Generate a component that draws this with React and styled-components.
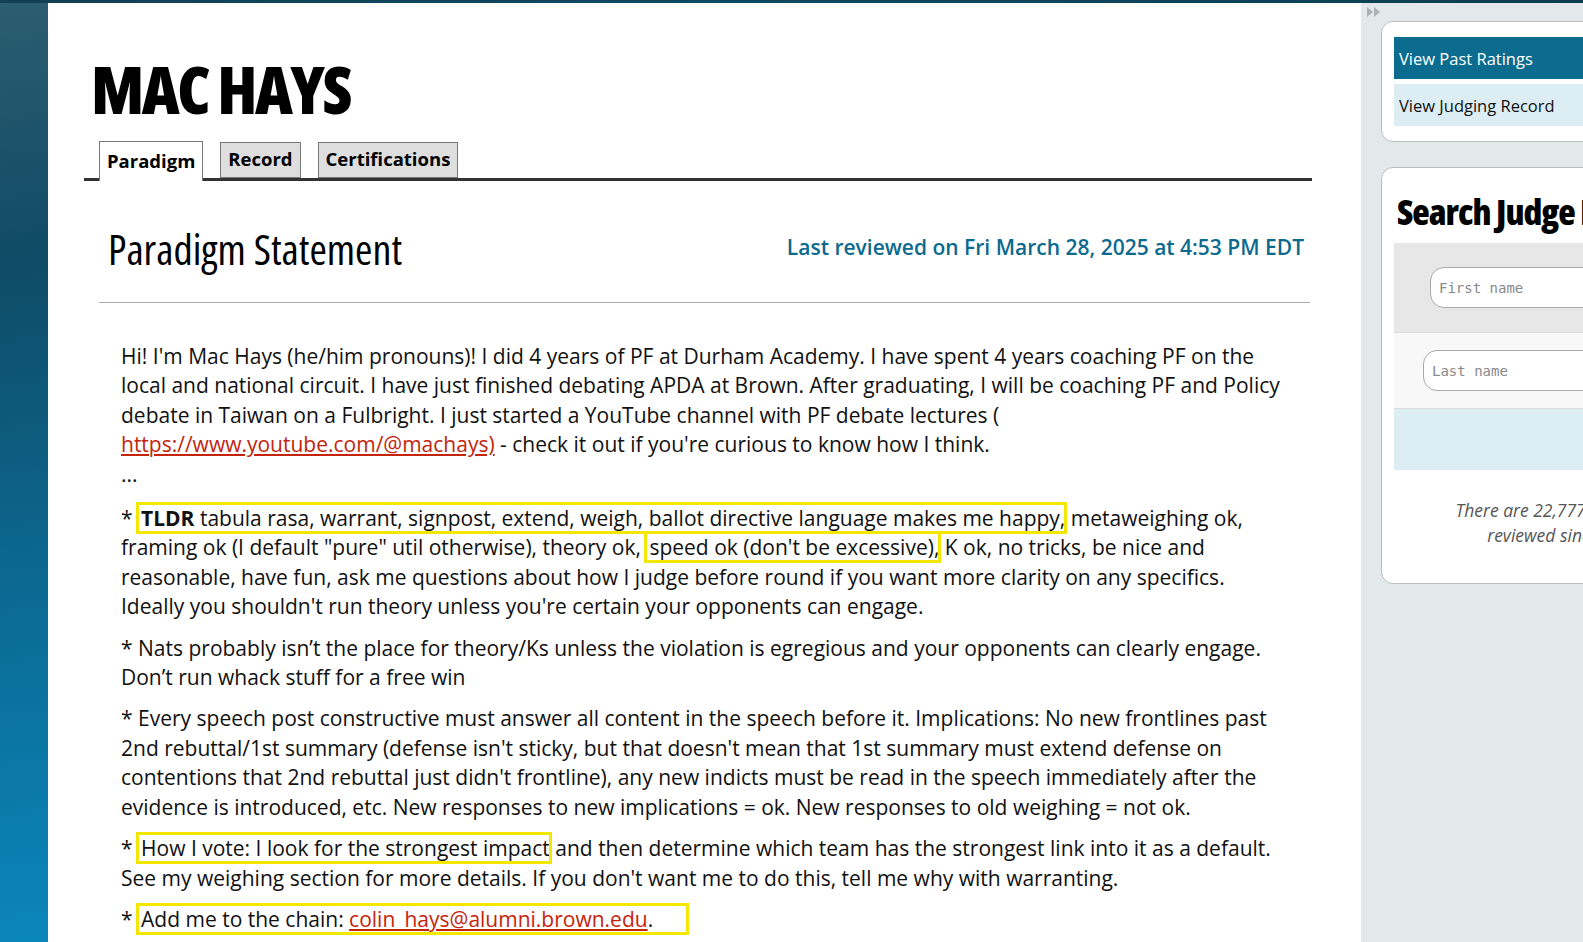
import React from "react";
import styled, { createGlobalStyle } from "styled-components";

const GlobalStyle = createGlobalStyle`
    html, body {
        margin: 0;
        padding: 0;
        overflow: hidden;
        height: 100%;
    }
    body {
        font-family: "Open Sans", "Liberation Sans", sans-serif;
        color: #111;
    }
`;

// condensed display face for page headings
const condensed = `"Open Sans", "Noto Sans", sans-serif`;

const App = () => {
    return (
        <>
            <GlobalStyle />
            <Page>
                <Gutter />
                <Main>
                    <Title>MAC HAYS</Title>
                    <TabBar>
                        <Tab $active>Paradigm</Tab>
                        <Tab>Record</Tab>
                        <Tab>Certifications</Tab>
                    </TabBar>

                    <Section>
                        <SectionHead>
                            <SectionTitle>Paradigm Statement</SectionTitle>
                            <Reviewed>Last reviewed on Fri March 28, 2025 at 4:53 PM EDT</Reviewed>
                        </SectionHead>

                        <Statement>
                            <p>
                                Hi! I'm Mac Hays (he/him pronouns)! I did 4 years of PF at Durham Academy. I have
                                spent 4 years coaching PF on the local and national circuit. I have just finished
                                debating APDA at Brown. After graduating, I will be coaching PF and Policy debate in
                                Taiwan on a Fulbright. I just started a YouTube channel with PF debate lectures ({" "}
                                <a href="#yt">https://www.youtube.com/@machays)</a> - check it out if you're curious
                                to know how I think.
                                <br />
                                ...
                            </p>
                            <p>
                                *{" "}
                                <Mark>
                                    <b>TLDR</b> tabula rasa, warrant, signpost, extend, weigh, ballot directive
                                    language makes me happy,
                                </Mark>{" "}
                                metaweighing ok, framing ok (I default "pure" util otherwise), theory ok,{" "}
                                <Mark>speed ok (don't be excessive),</Mark> K ok, no tricks, be nice and
                                reasonable, have fun, ask me questions about how I judge before round if you want
                                more clarity on any specifics. Ideally you shouldn't run theory unless you're
                                certain your opponents can engage.
                            </p>
                            <p>
                                * Nats probably isn’t the place for theory/Ks unless the violation is egregious and
                                your opponents can clearly engage. Don’t run whack stuff for a free win
                            </p>
                            <p>
                                * Every speech post constructive must answer all content in the speech before it.
                                Implications: No new frontlines past 2nd rebuttal/1st summary (defense isn't sticky,
                                but that doesn't mean that 1st summary must extend defense on contentions that 2nd
                                rebuttal just didn't frontline), any new indicts must be read in the speech
                                immediately after the evidence is introduced, etc. New responses to new implications
                                = ok. New responses to old weighing = not ok.
                            </p>
                            <p>
                                * <Mark>How I vote: I look for the strongest impact</Mark> and then determine which
                                team has the strongest link into it as a default. See my weighing section for more
                                details. If you don't want me to do this, tell me why with warranting.
                            </p>
                            <p>
                                *{" "}
                                <Mark $wide>
                                    Add me to the chain: <a href="#mail">colin_hays@alumni.brown.edu</a>.
                                </Mark>
                            </p>
                        </Statement>
                    </Section>
                </Main>

                <Sidebar>
                    <Collapse>
                        <svg width="14" height="10" viewBox="0 0 14 10">
                            <path d="M0 0 L6 5 L0 10 Z M7 0 L13 5 L7 10 Z" fill="#a9b2b7" />
                        </svg>
                    </Collapse>

                    <Card>
                        <MenuLink $current>View Past Ratings</MenuLink>
                        <MenuLink>View Judging Record</MenuLink>
                    </Card>

                    <Card>
                        <CardTitle>Search Judge Paradigms</CardTitle>
                        <FieldRow $tone="#e7e7e7" $indent="36px" $tall>
                            <Input placeholder="First name" />
                        </FieldRow>
                        <FieldRow $tone="#f8f8f8" $indent="29px">
                            <Input placeholder="Last name" />
                        </FieldRow>
                        <SubmitRow />
                        <Note>There are 22,777 paradigms reviewed since 2023</Note>
                    </Card>
                </Sidebar>
            </Page>
        </>
    );
};

const Page = styled.div`
    display: flex;
    width: 1760px;
    min-height: 100vh;
    box-sizing: border-box;
    padding-top: 3px;
    background: linear-gradient(90deg, #123f52 0%, #0e4a62 40%, #0c3c50 100%) top / 100% 3px no-repeat,
        linear-gradient(172deg, #2d5d70 0%, #0f4b66 22%, #0b6c96 52%, #0a99d6 100%);
`;

const Gutter = styled.div`
    width: 48px;
    flex-shrink: 0;
`;

const Main = styled.main`
    width: 1313px;
    flex-shrink: 0;
    background: #fff;
    box-sizing: border-box;
    padding: 47px 49px 0 36px;
`;

const Title = styled.h1`
    margin: 0 0 0 7px;
    font-family: ${condensed};
    font-stretch: 75%;
    font-weight: 800;
    font-size: 66px;
    line-height: 76px;
    letter-spacing: -2.5px;
    color: #000;
`;

const TabBar = styled.div`
    display: flex;
    align-items: flex-end;
    gap: 17px;
    margin-top: 15px;
    padding-left: 15px;
    height: 37px;
    border-bottom: 3px solid #333;
`;

const Tab = styled.div`
    box-sizing: border-box;
    display: flex;
    align-items: center;
    padding: 0 7px 3px;
    height: ${(p) => (p.$active ? "40px" : "36px")};
    margin-bottom: ${(p) => (p.$active ? "-3px" : "0")};
    background: ${(p) => (p.$active ? "#fff" : "#dedede")};
    border: 1px solid #777;
    border-bottom: ${(p) => (p.$active ? "none" : "1px solid #777")};
    font-weight: 700;
    font-size: 18.5px;
    color: #000;
`;

const Section = styled.section`
    margin: 42px 2px 0 15px;
`;

const SectionHead = styled.div`
    display: flex;
    align-items: center;
    justify-content: space-between;
    padding: 2px 6px 29px 9px;
    border-bottom: 1px solid #aaa;
`;

const SectionTitle = styled.h2`
    margin: 0;
    font-family: ${condensed};
    font-stretch: 75%;
    font-weight: 500;
    font-size: 42px;
    line-height: 48px;
    color: #000;
`;

const Reviewed = styled.div`
    font-size: 21px;
    font-weight: 600;
    color: #0b6a8e;
    margin-top: -4px;
`;

const Statement = styled.div`
    padding: 39px 18px 0 22px;
    font-size: 21px;
    line-height: 29.4px;
    color: #111;

    p {
        margin: 0 0 12px;
    }
    p:first-child {
        margin-bottom: 15px;
    }
    a {
        color: #c4240c;
        text-decoration: underline;
    }
    b {
        font-weight: 700;
    }
`;

const Mark = styled.span`
    outline: 3px solid #f3e600;
    outline-offset: -1px;
    padding: 0 ${(p) => (p.$wide ? "34px" : "0")} 0 3px;
`;

const Sidebar = styled.aside`
    width: 387px;
    flex-shrink: 0;
    background: #e3e8eb;
    box-sizing: border-box;
    padding: 4px 0 0 20px;
`;

const Collapse = styled.div`
    margin-left: -14px;
    height: 14px;
    line-height: 0;
`;

const Card = styled.div`
    background: #fff;
    border: 1px solid #b9bec1;
    border-radius: 12px;
    padding: 15px 12px;
    margin-bottom: 25px;
`;

const MenuLink = styled.div`
    display: flex;
    align-items: center;
    height: 42px;
    padding-left: 5px;
    margin-bottom: 5px;
    font-size: 16.5px;
    background: ${(p) => (p.$current ? "#0b6c8f" : "#dcedf4")};
    color: ${(p) => (p.$current ? "#fff" : "#111")};

    &:last-child {
        margin-bottom: 0;
    }
`;

const CardTitle = styled.h3`
    margin: 6px 0 8px 3px;
    font-family: ${condensed};
    font-stretch: 75%;
    font-weight: 800;
    font-size: 36px;
    line-height: 46px;
    letter-spacing: -1px;
    white-space: nowrap;
    color: #000;
`;

const FieldRow = styled.div`
    background: ${(p) => p.$tone};
    padding: 0 0 0 ${(p) => p.$indent};
    height: ${(p) => (p.$tall ? "89px" : "75px")};
    display: flex;
    align-items: center;
    border-bottom: 1px solid #dadada;
`;

const Input = styled.input`
    width: 240px;
    height: 41px;
    box-sizing: border-box;
    border: 1px solid #a9a9a9;
    border-radius: 14px;
    padding: 0 8px;
    font-family: "DejaVu Sans Mono", "Liberation Mono", monospace;
    font-size: 14px;
    background: #fff;

    &::placeholder {
        color: #8a8a8a;
    }
`;

const SubmitRow = styled.div`
    height: 61px;
    background: #dcedf4;
`;

const Note = styled.p`
    margin: 28px 0 20px;
    padding: 0 44px;
    text-align: center;
    font-style: italic;
    font-size: 17.5px;
    line-height: 25px;
    color: #555;
`;

export default App;
